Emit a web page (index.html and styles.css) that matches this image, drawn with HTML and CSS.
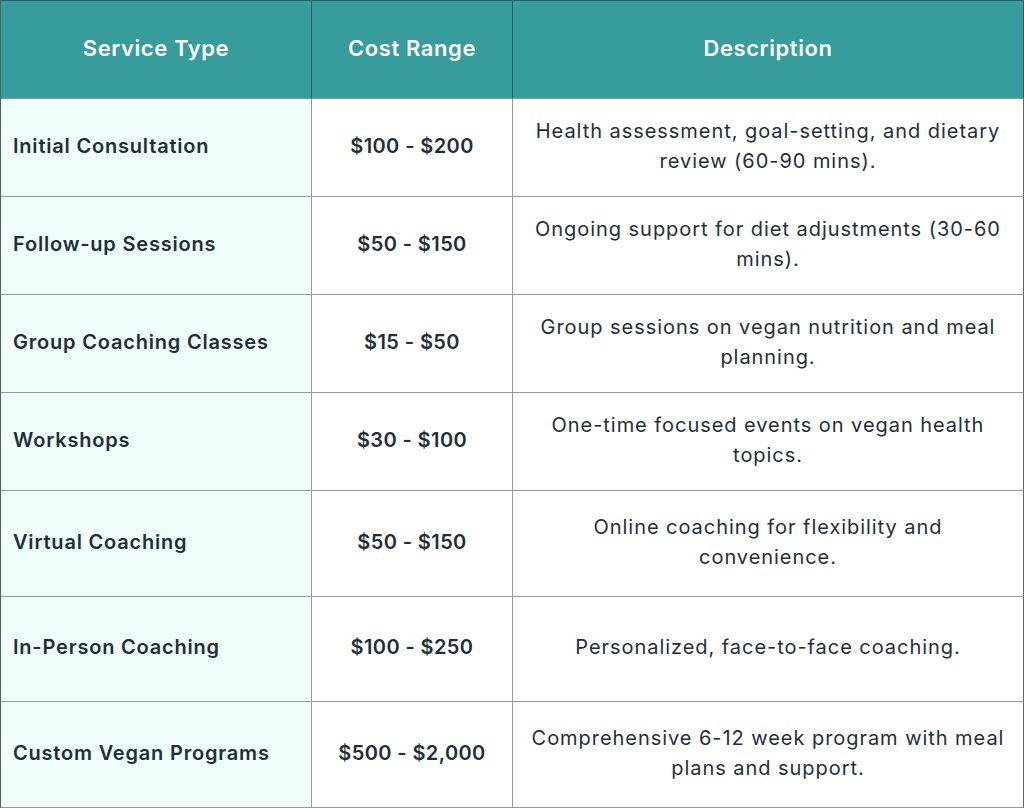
FILE: index.html
```html
<!DOCTYPE html>
<html lang="en">
<head>
<meta charset="utf-8">
<title>Vegan Coaching Services</title>
<link rel="stylesheet" href="styles.css">
</head>
<body>
<div class="table">
  <div class="cell head">Service Type</div>
  <div class="cell head">Cost Range</div>
  <div class="cell head last">Description</div>

  <div class="cell name">Initial Consultation</div>
  <div class="cell cost">$100 - $200</div>
  <div class="cell desc">Health assessment, goal-setting, and dietary review (60-90 mins).</div>

  <div class="cell name">Follow-up Sessions</div>
  <div class="cell cost">$50 - $150</div>
  <div class="cell desc">Ongoing support for diet adjustments (30-60 mins).</div>

  <div class="cell name">Group Coaching Classes</div>
  <div class="cell cost">$15 - $50</div>
  <div class="cell desc">Group sessions on vegan nutrition and meal planning.</div>

  <div class="cell name">Workshops</div>
  <div class="cell cost">$30 - $100</div>
  <div class="cell desc">One-time focused events on vegan health topics.</div>

  <div class="cell name">Virtual Coaching</div>
  <div class="cell cost">$50 - $150</div>
  <div class="cell desc">Online coaching for flexibility and convenience.</div>

  <div class="cell name">In-Person Coaching</div>
  <div class="cell cost">$100 - $250</div>
  <div class="cell desc">Personalized, face-to-face coaching.</div>

  <div class="cell name">Custom Vegan Programs</div>
  <div class="cell cost">$500 - $2,000</div>
  <div class="cell desc">Comprehensive 6-12 week program with meal plans and support.</div>
</div>
</body>
</html>
```

FILE: styles.css
```css
html, body {
  margin: 0;
  padding: 0;
  background: #ffffff;
}

.table {
  width: 1024px;
  height: 808px;
  box-sizing: border-box;
  display: grid;
  grid-template-columns: 311px 201px 511px;
  grid-template-rows: 98px 98px 98px 98px 98px 106px 105px 106px;
  border-top: 1px solid #2b5f60;
  border-left: 1px solid #555f60;
  font-family: Inter, "Noto Sans", sans-serif;
  color: #1f2f3a;
}

.cell {
  box-sizing: border-box;
  display: flex;
  align-items: center;
  justify-content: center;
  text-align: center;
  border-right: 1px solid #9a9a9a;
  border-bottom: 1px solid #9a9a9a;
  font-size: 20px;
  line-height: 30px;
  letter-spacing: 0.8px;
  padding-bottom: 4px;
}

.head {
  background: #379c9c;
  color: #ffffff;
  font-weight: 600;
  font-size: 22px;
  letter-spacing: 0.6px;
  border-right-color: #2b5f60;
  border-bottom-color: #8a9a9a;
}

.name {
  background: #effefb;
  justify-content: flex-start;
  text-align: left;
  padding-left: 12px;
  font-weight: 600;
}

.cost {
  font-weight: 600;
  letter-spacing: 0.4px;
}

.desc {
  padding-left: 16px;
  padding-right: 16px;
  font-weight: 400;
  letter-spacing: 0.95px;
}

.desc:nth-child(3n) {
  border-right-color: #666;
}
```
